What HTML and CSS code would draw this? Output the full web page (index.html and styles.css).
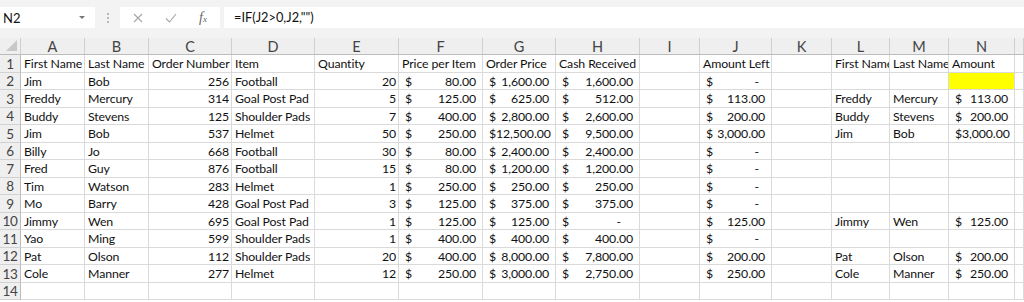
FILE: index.html
```html
<!DOCTYPE html>
<html lang="en">
<head>
    <meta charset="UTF-8">
    <title>Orders</title>
    <link rel="stylesheet" href="styles.css">
</head>
<body>

    <div class="formula-bar">
        <div class="name-box">N2<span class="arrow"></span></div>
        <div class="grip"><i></i><i></i><i></i></div>
        <div class="func-box">
            <svg class="fb-icon" width="10" height="10" viewBox="0 0 10 10"><path d="M1 1L9 9M9 1L1 9" stroke="#a6a6a6" stroke-width="1.1" fill="none"/></svg>
            <svg class="fb-icon" width="12" height="10" viewBox="0 0 12 10"><path d="M1 5.5L4.5 9L11 1" stroke="#a6a6a6" stroke-width="1.1" fill="none"/></svg>
            <span class="fx">f<sub>x</sub></span>
        </div>
        <div class="formula-input">=IF(J2&gt;0,J2,"")</div>
    </div>

    <div class="sheet">
        <div class="row head">
            <div class="corner"><span></span></div>
            <div>A</div><div>B</div><div>C</div><div>D</div><div>E</div><div>F</div><div>G</div>
            <div>H</div><div>I</div><div>J</div><div>K</div><div>L</div><div>M</div><div>N</div><div></div>
        </div>

        <div class="row tall">
            <div class="rh">1</div>
            <div class="c">First Name</div><div class="c">Last Name</div><div class="c">Order Number</div><div class="c">Item</div>
            <div class="c">Quantity</div><div class="c">Price per Item</div><div class="c">Order Price</div><div class="c">Cash Received</div>
            <div class="c"></div><div class="c">Amount Left</div><div class="c"></div>
            <div class="c">First Name</div><div class="c">Last Name</div><div class="c">Amount</div><div class="c"></div>
        </div>

        <div class="row">
            <div class="rh">2</div>
            <div class="c">Jim</div><div class="c">Bob</div><div class="c num">256</div><div class="c">Football</div><div class="c num">20</div>
            <div class="c acct"><span>$</span><span>80.00</span></div>
            <div class="c acct"><span>$</span><span>1,600.00</span></div>
            <div class="c acct"><span>$</span><span>1,600.00</span></div>
            <div class="c"></div>
            <div class="c acct"><span>$</span><span class="dash">-</span></div>
            <div class="c"></div><div class="c"></div><div class="c"></div><div class="c yellow"></div><div class="c"></div>
        </div>

        <div class="row tall">
            <div class="rh">3</div>
            <div class="c">Freddy</div><div class="c">Mercury</div><div class="c num">314</div><div class="c">Goal Post Pad</div><div class="c num">5</div>
            <div class="c acct"><span>$</span><span>125.00</span></div>
            <div class="c acct"><span>$</span><span>625.00</span></div>
            <div class="c acct"><span>$</span><span>512.00</span></div>
            <div class="c"></div>
            <div class="c acct"><span>$</span><span>113.00</span></div>
            <div class="c"></div><div class="c">Freddy</div><div class="c">Mercury</div>
            <div class="c acct"><span>$</span><span>113.00</span></div><div class="c"></div>
        </div>

        <div class="row">
            <div class="rh">4</div>
            <div class="c">Buddy</div><div class="c">Stevens</div><div class="c num">125</div><div class="c">Shoulder Pads</div><div class="c num">7</div>
            <div class="c acct"><span>$</span><span>400.00</span></div>
            <div class="c acct"><span>$</span><span>2,800.00</span></div>
            <div class="c acct"><span>$</span><span>2,600.00</span></div>
            <div class="c"></div>
            <div class="c acct"><span>$</span><span>200.00</span></div>
            <div class="c"></div><div class="c">Buddy</div><div class="c">Stevens</div>
            <div class="c acct"><span>$</span><span>200.00</span></div><div class="c"></div>
        </div>

        <div class="row tall">
            <div class="rh">5</div>
            <div class="c">Jim</div><div class="c">Bob</div><div class="c num">537</div><div class="c">Helmet</div><div class="c num">50</div>
            <div class="c acct"><span>$</span><span>250.00</span></div>
            <div class="c acct"><span>$</span><span>12,500.00</span></div>
            <div class="c acct"><span>$</span><span>9,500.00</span></div>
            <div class="c"></div>
            <div class="c acct"><span>$</span><span>3,000.00</span></div>
            <div class="c"></div><div class="c">Jim</div><div class="c">Bob</div>
            <div class="c acct"><span>$</span><span>3,000.00</span></div><div class="c"></div>
        </div>

        <div class="row">
            <div class="rh">6</div>
            <div class="c">Billy</div><div class="c">Jo</div><div class="c num">668</div><div class="c">Football</div><div class="c num">30</div>
            <div class="c acct"><span>$</span><span>80.00</span></div>
            <div class="c acct"><span>$</span><span>2,400.00</span></div>
            <div class="c acct"><span>$</span><span>2,400.00</span></div>
            <div class="c"></div>
            <div class="c acct"><span>$</span><span class="dash">-</span></div>
            <div class="c"></div><div class="c"></div><div class="c"></div><div class="c"></div><div class="c"></div>
        </div>

        <div class="row tall">
            <div class="rh">7</div>
            <div class="c">Fred</div><div class="c">Guy</div><div class="c num">876</div><div class="c">Football</div><div class="c num">15</div>
            <div class="c acct"><span>$</span><span>80.00</span></div>
            <div class="c acct"><span>$</span><span>1,200.00</span></div>
            <div class="c acct"><span>$</span><span>1,200.00</span></div>
            <div class="c"></div>
            <div class="c acct"><span>$</span><span class="dash">-</span></div>
            <div class="c"></div><div class="c"></div><div class="c"></div><div class="c"></div><div class="c"></div>
        </div>

        <div class="row">
            <div class="rh">8</div>
            <div class="c">Tim</div><div class="c">Watson</div><div class="c num">283</div><div class="c">Helmet</div><div class="c num">1</div>
            <div class="c acct"><span>$</span><span>250.00</span></div>
            <div class="c acct"><span>$</span><span>250.00</span></div>
            <div class="c acct"><span>$</span><span>250.00</span></div>
            <div class="c"></div>
            <div class="c acct"><span>$</span><span class="dash">-</span></div>
            <div class="c"></div><div class="c"></div><div class="c"></div><div class="c"></div><div class="c"></div>
        </div>

        <div class="row tall">
            <div class="rh">9</div>
            <div class="c">Mo</div><div class="c">Barry</div><div class="c num">428</div><div class="c">Goal Post Pad</div><div class="c num">3</div>
            <div class="c acct"><span>$</span><span>125.00</span></div>
            <div class="c acct"><span>$</span><span>375.00</span></div>
            <div class="c acct"><span>$</span><span>375.00</span></div>
            <div class="c"></div>
            <div class="c acct"><span>$</span><span class="dash">-</span></div>
            <div class="c"></div><div class="c"></div><div class="c"></div><div class="c"></div><div class="c"></div>
        </div>

        <div class="row">
            <div class="rh">10</div>
            <div class="c">Jimmy</div><div class="c">Wen</div><div class="c num">695</div><div class="c">Goal Post Pad</div><div class="c num">1</div>
            <div class="c acct"><span>$</span><span>125.00</span></div>
            <div class="c acct"><span>$</span><span>125.00</span></div>
            <div class="c acct"><span>$</span><span class="dash wide">-</span></div>
            <div class="c"></div>
            <div class="c acct"><span>$</span><span>125.00</span></div>
            <div class="c"></div><div class="c">Jimmy</div><div class="c">Wen</div>
            <div class="c acct"><span>$</span><span>125.00</span></div><div class="c"></div>
        </div>

        <div class="row tall">
            <div class="rh">11</div>
            <div class="c">Yao</div><div class="c">Ming</div><div class="c num">599</div><div class="c">Shoulder Pads</div><div class="c num">1</div>
            <div class="c acct"><span>$</span><span>400.00</span></div>
            <div class="c acct"><span>$</span><span>400.00</span></div>
            <div class="c acct"><span>$</span><span>400.00</span></div>
            <div class="c"></div>
            <div class="c acct"><span>$</span><span class="dash">-</span></div>
            <div class="c"></div><div class="c"></div><div class="c"></div><div class="c"></div><div class="c"></div>
        </div>

        <div class="row">
            <div class="rh">12</div>
            <div class="c">Pat</div><div class="c">Olson</div><div class="c num">112</div><div class="c">Shoulder Pads</div><div class="c num">20</div>
            <div class="c acct"><span>$</span><span>400.00</span></div>
            <div class="c acct"><span>$</span><span>8,000.00</span></div>
            <div class="c acct"><span>$</span><span>7,800.00</span></div>
            <div class="c"></div>
            <div class="c acct"><span>$</span><span>200.00</span></div>
            <div class="c"></div><div class="c">Pat</div><div class="c">Olson</div>
            <div class="c acct"><span>$</span><span>200.00</span></div><div class="c"></div>
        </div>

        <div class="row tall">
            <div class="rh">13</div>
            <div class="c">Cole</div><div class="c">Manner</div><div class="c num">277</div><div class="c">Helmet</div><div class="c num">12</div>
            <div class="c acct"><span>$</span><span>250.00</span></div>
            <div class="c acct"><span>$</span><span>3,000.00</span></div>
            <div class="c acct"><span>$</span><span>2,750.00</span></div>
            <div class="c"></div>
            <div class="c acct"><span>$</span><span>250.00</span></div>
            <div class="c"></div><div class="c">Cole</div><div class="c">Manner</div>
            <div class="c acct"><span>$</span><span>250.00</span></div><div class="c"></div>
        </div>

        <div class="row">
            <div class="rh">14</div>
            <div class="c"></div><div class="c"></div><div class="c"></div><div class="c"></div><div class="c"></div>
            <div class="c"></div><div class="c"></div><div class="c"></div><div class="c"></div><div class="c"></div>
            <div class="c"></div><div class="c"></div><div class="c"></div><div class="c"></div><div class="c"></div>
        </div>
    </div>

</body>
</html>
```

FILE: styles.css
```css
body {
    margin: 0;
    width: 1024px;
    height: 302px;
    overflow: hidden;
    font-family: Lato, 'Liberation Sans', sans-serif;
    background-color: #fff;
    color: #111;
}

/* formula bar */

.formula-bar {
    display: flex;
    align-items: flex-start;
    height: 38px;
    padding-top: 7px;
    box-sizing: border-box;
    background-color: #f3f3f3;
}

.name-box {
    display: flex;
    align-items: center;
    justify-content: space-between;
    width: 95px;
    height: 21px;
    padding: 0 10px 0 3px;
    box-sizing: border-box;
    background-color: #fff;
    font-size: 13px;
}

.arrow {
    width: 0;
    height: 0;
    border-left: 3px solid transparent;
    border-right: 3px solid transparent;
    border-top: 3px solid #777;
}

.grip {
    display: flex;
    flex-direction: column;
    gap: 2px;
    width: 25px;
    padding-top: 6px;
    align-items: center;
}

.grip i {
    width: 2px;
    height: 2px;
    background-color: #b8b8b8;
}

.func-box {
    display: flex;
    align-items: center;
    width: 100px;
    height: 21px;
    padding-left: 13px;
    box-sizing: border-box;
    background-color: #fff;
}

.fb-icon {
    margin-right: 22px;
}

.fx {
    font-family: 'Liberation Serif', serif;
    font-style: italic;
    font-size: 14px;
    color: #666;
}

.fx sub {
    font-size: 9px;
    vertical-align: 0;
}

.formula-input {
    flex: 1;
    height: 21px;
    margin-left: 4px;
    padding-left: 10px;
    line-height: 21px;
    background-color: #fff;
    font-size: 12.8px;
}

/* grid */

.row {
    display: grid;
    grid-template-columns: 21px 64px 64px 83px 83px 84px 84px 73px 84px 60px 72px 60px 58px 59px 66px 1fr;
    height: 17px;
    font-size: 12.3px;
    letter-spacing: -0.1px;
    line-height: 17px;
}

.row.tall {
    height: 18px;
    line-height: 18px;
}

.row > div {
    box-sizing: border-box;
    border-right: 1px solid #dadada;
    border-bottom: 1px solid #dadada;
    white-space: nowrap;
    overflow: hidden;
}

.head {
    background-color: #efefef;
    color: #444;
    font-size: 14.5px;
    letter-spacing: 0;
}

.head > div {
    text-align: center;
    border-right-color: #cfcfcf;
    border-bottom-color: #bcbcbc;
}

.corner {
    position: relative;
}

.corner span {
    position: absolute;
    right: 3px;
    bottom: 3px;
    width: 0;
    height: 0;
    border-left: 11px solid transparent;
    border-bottom: 11px solid #c8c8c8;
}

.rh {
    text-align: center;
    background-color: #efefef;
    color: #444;
    font-size: 13.5px;
    letter-spacing: -0.3px;
    border-right-color: #bcbcbc !important;
    border-bottom-color: #d2d2d2 !important;
}

.c {
    padding: 0 2px 0 3px;
}

.num {
    text-align: right;
}

.acct {
    display: flex;
    justify-content: space-between;
    padding: 0 6px 0 6px;
}

.dash {
    padding-right: 6px;
}

.dash.wide {
    padding-right: 12px;
}

.yellow {
    background-color: #ffff00;
}
```
